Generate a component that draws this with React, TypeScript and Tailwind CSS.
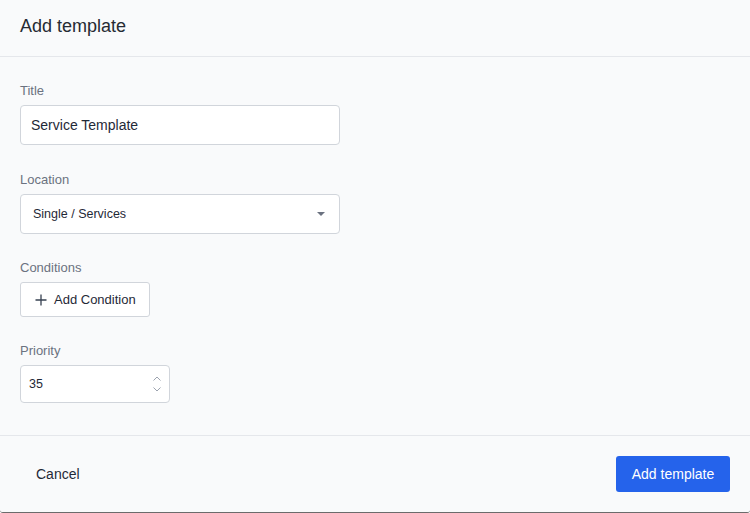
import { useState } from "react";

function Field({ label, className = "", children }: { label: string; className?: string; children: React.ReactNode }) {
  return (
    <div className={`flex flex-col ${className}`}>
      <label className="mb-1 text-[13px] leading-5 text-[#6b7280]">{label}</label>
      {children}
    </div>
  );
}

export default function App() {
  const [title, setTitle] = useState("Service Template");
  const [priority, setPriority] = useState("35");

  return (
    <div
      className="flex h-[513px] w-[750px] flex-col rounded-b-[3px] border-b border-[#6b6b6b] bg-[#f9fafb] text-[#1f2937]"
      style={{ fontFamily: '"Liberation Sans", Arial, sans-serif' }}
    >
      <header className="flex h-[57px] shrink-0 items-center border-b border-[#e5e7eb] px-5 pb-[3px]">
        <h1 className="text-[18px] font-normal text-[#262b33]">Add template</h1>
      </header>

      <div className="flex flex-1 flex-col gap-6 px-5 pt-6">
        <Field label="Title">
          <input
            value={title}
            onChange={(e) => setTitle(e.target.value)}
            className="h-10 w-[320px] rounded-[4px] border border-[#d1d5db] bg-white px-[10px] text-[14px] text-[#1f2937] outline-none"
          />
        </Field>

        <Field label="Location" className="mt-px">
          <div className="flex h-10 w-[320px] items-center justify-between rounded-[4px] border border-[#d1d5db] bg-white pl-3 pr-[14px]">
            <span className="text-[12.5px] text-[#1f2937]">Single / Services</span>
            <svg width="8" height="4" viewBox="0 0 8 4" aria-hidden>
              <path d="M0 0h8L4 4z" fill="#6b7280" />
            </svg>
          </div>
        </Field>

        <Field label="Conditions">
          <button className="flex h-[35px] w-[130px] items-center gap-[7px] rounded-[3px] border border-[#d1d5db] bg-white pl-[14px] text-[13px] text-[#1f2937]">
            <svg width="12" height="12" viewBox="0 0 12 12" aria-hidden>
              <path d="M6 0.5v11M0.5 6h11" stroke="#374151" strokeWidth="1.3" />
            </svg>
            Add Condition
          </button>
        </Field>

        <Field label="Priority">
          <div className="flex h-[38px] w-[150px] items-center justify-between rounded-[4px] border border-[#d1d5db] bg-white pl-2 pr-[7px]">
            <input
              value={priority}
              onChange={(e) => setPriority(e.target.value)}
              className="w-16 bg-transparent text-[12.5px] text-[#1f2937] outline-none"
            />
            <svg width="10" height="18" viewBox="0 0 10 18" aria-hidden>
              <path d="M1.5 5.5L5 2l3.5 3.5M1.5 12.5L5 16l3.5-3.5" fill="none" stroke="#9ca3af" strokeWidth="1" />
            </svg>
          </div>
        </Field>
      </div>

      <footer className="flex h-[77px] shrink-0 items-center justify-between border-t border-[#e5e7eb] pl-9 pr-5">
        <button className="text-[14px] text-[#1f2937]">Cancel</button>
        <button className="h-9 w-[114px] rounded-[3px] bg-[#2563eb] text-[14px] text-white">Add template</button>
      </footer>
    </div>
  );
}
